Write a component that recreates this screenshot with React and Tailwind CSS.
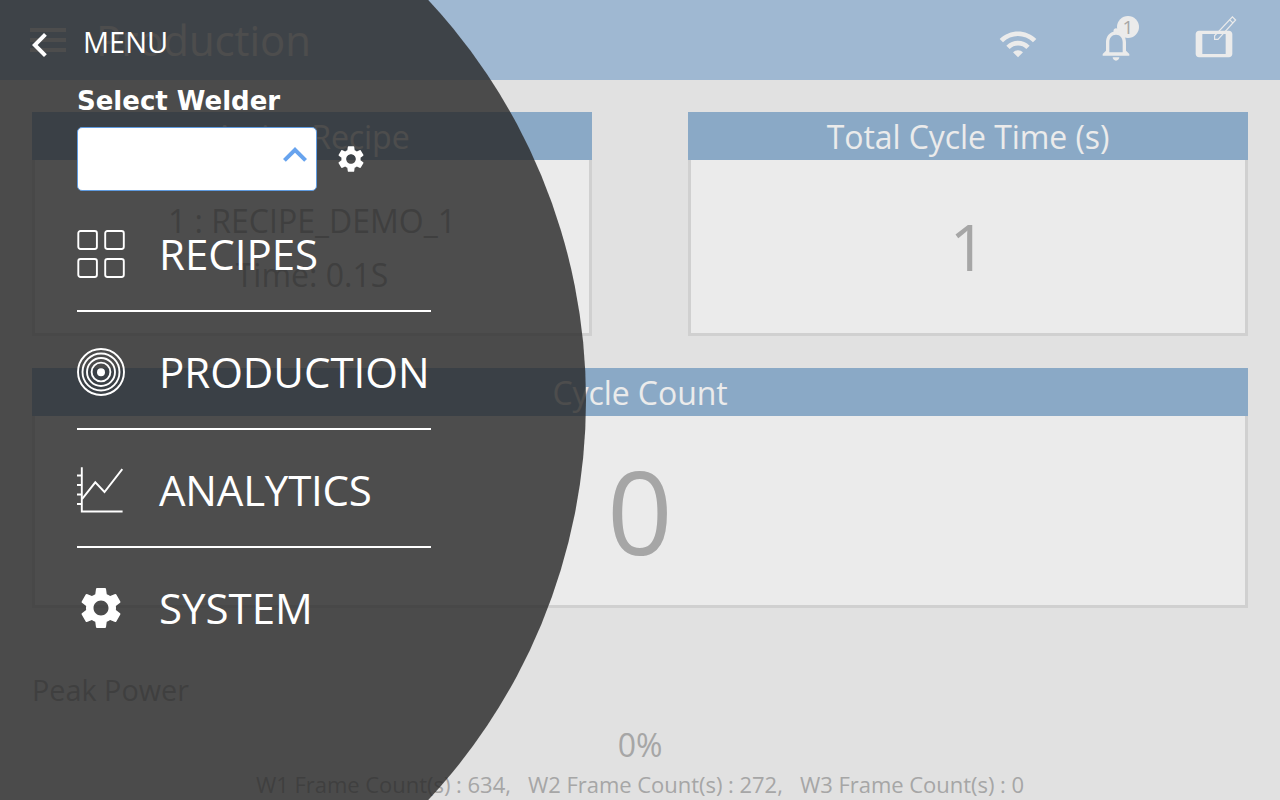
import { MdWifi, MdNotificationsNone, MdTablet, MdChevronLeft, MdMenu, MdSettings, MdExpandLess } from "react-icons/md";

function PencilIcon() {
  return (
    <svg className="absolute left-[19px] -top-[9px] h-[26px] w-[26px]" viewBox="0 0 26 26" fill="none" stroke="currentColor" strokeWidth="1.2">
      <path d="M1.6 24.4V20.8L19.4 1.9L22.6 5L5 24.4ZM16.8 4.8L19.8 7.8" />
    </svg>
  );
}

function GridIcon() {
  return (
    <svg className="h-12 w-12" viewBox="0 0 48 48" fill="none" stroke="currentColor" strokeWidth="1.9">
      <rect x="1.3" y="1" width="18.6" height="18" rx="2.2" />
      <rect x="28.2" y="1" width="18.6" height="18" rx="2.2" />
      <rect x="1.3" y="29" width="18.6" height="18" rx="2.2" />
      <rect x="28.2" y="29" width="18.6" height="18" rx="2.2" />
    </svg>
  );
}

function TargetIcon() {
  return (
    <svg className="h-12 w-12" viewBox="0 0 48 48" fill="none" stroke="currentColor" strokeWidth="1.9">
      <circle cx="24" cy="24" r="23" />
      <circle cx="24" cy="24" r="18.5" />
      <circle cx="24" cy="24" r="14" />
      <circle cx="24" cy="24" r="9.4" />
      <circle cx="24" cy="24.3" r="4" fill="currentColor" stroke="none" />
    </svg>
  );
}

function ChartIcon() {
  return (
    <svg className="h-12 w-12" viewBox="0 0 48 48" fill="none" stroke="currentColor" strokeWidth="1.9">
      <path d="M4.8 1.2V45.5H45.6" />
      <path d="M0 9.5H4.8M0 19H4.8M0 28.5H4.8M0 38H4.8" />
      <path d="M5 33.2L18.3 16.3L27.5 26L45.3 3.2" />
    </svg>
  );
}

function Card({ title, className, children }) {
  return (
    <section className={"flex flex-col " + className}>
      <h2 className="h-12 bg-[#8aa9c6] text-center text-[32px] leading-[50px] tracking-[-0.07px] text-[#ebebeb]">{title}</h2>
      <div className="flex flex-1 flex-col items-center justify-center border-x-[3px] border-b-[3px] border-[#d0d0d0] bg-[#ebebeb]">
        {children}
      </div>
    </section>
  );
}

function MenuItem({ icon, label, tracking = "", last }) {
  return (
    <li className={"flex h-[82px] w-[354px] items-start " + (last ? "" : "border-b-2 border-white")}>
      <span className="w-[82px] shrink-0">{icon}</span>
      <span className={"whitespace-nowrap text-[42px] leading-[48px] " + tracking}>{label}</span>
    </li>
  );
}

export default function App() {
  return (
    <div className="relative h-[800px] w-[1280px] overflow-hidden bg-[#e1e1e1] font-['Open_Sans',sans-serif] text-[#a6a6a6]">
      <header className="flex h-20 items-center bg-[#9fb8d2] pl-6 pr-[46px] text-[#ebebeb]">
        <MdMenu className="h-12 w-12" />
        <h1 className="ml-6 flex-1 text-[41.8px] leading-[80px]">Production</h1>
        <div className="flex gap-[58px] pt-2">
          <MdWifi className="h-10 w-10" />
          <div className="relative">
            <MdNotificationsNone className="h-10 w-10" />
            <span className="absolute left-[21px] -top-2 h-[22px] w-[22px] rounded-full bg-[#ebebeb] text-center text-[19px] leading-[23px] text-[#a6a6a6]">1</span>
          </div>
          <div className="relative">
            <MdTablet className="h-10 w-10" />
            <PencilIcon />
          </div>
        </div>
      </header>

      <main className="px-8 pt-8">
        <div className="flex gap-24">
          <Card title="Active Recipe" className="h-56 flex-1">
            <p className="pt-[3px] text-[32px] leading-[54px]">1 : RECIPE_DEMO_1</p>
            <p className="text-[32px] leading-[54px]">Time: 0.1S</p>
          </Card>
          <Card title="Total Cycle Time (s)" className="h-56 flex-1">
            <p className="pt-px text-[64px] leading-none">1</p>
          </Card>
        </div>
        <Card title="Cycle Count" className="mt-8 h-60">
          <p className="text-[115px] leading-none">0</p>
        </Card>
        <p className="mt-[61px] text-[28.8px] leading-[42px]">Peak Power</p>
        <p className="mt-3 text-center text-[32px] leading-[44px]">0%</p>
        <p className="mt-[2px] whitespace-pre text-center text-[22px] leading-[30px] tracking-[-0.03px]">W1 Frame Count(s) : 634,   W2 Frame Count(s) : 272,   W3 Frame Count(s) : 0</p>
      </main>

      <div className="absolute -left-[586px] -top-[186px] h-[1172px] w-[1172px] rounded-full bg-[#262626]/80" />

      <nav className="absolute inset-y-0 left-0 w-[586px] text-white">
        <div className="flex h-[86px] items-center pl-4 pt-1">
          <MdChevronLeft className="h-12 w-12" />
          <span className="ml-[19px] pb-[6px] text-[29px] leading-[40px]">MENU</span>
        </div>
        <div className="pl-[77px]">
          <p className="h-[41px] font-['DejaVu_Sans',sans-serif] text-[26px] font-bold leading-[30px]">Select Welder</p>
          <div className="flex items-center">
            <div className="flex h-16 w-60 items-center justify-end rounded-[5px] border border-[#5f9be0] bg-white">
              <MdExpandLess className="-mr-[3px] -mt-2 h-12 w-12 text-[#67a3ee]" />
            </div>
            <MdSettings className="ml-[18px] h-8 w-8" />
          </div>
          <ul className="mt-[39px] flex flex-col gap-9">
            <MenuItem icon={<GridIcon />} label="RECIPES" />
            <MenuItem icon={<TargetIcon />} label="PRODUCTION" />
            <MenuItem icon={<ChartIcon />} label="ANALYTICS" tracking="tracking-[-0.2px]" />
            <MenuItem icon={<MdSettings className="-ml-px -mt-px h-[50px] w-[50px]" />} label="SYSTEM" last />
          </ul>
        </div>
      </nav>
    </div>
  );
}
